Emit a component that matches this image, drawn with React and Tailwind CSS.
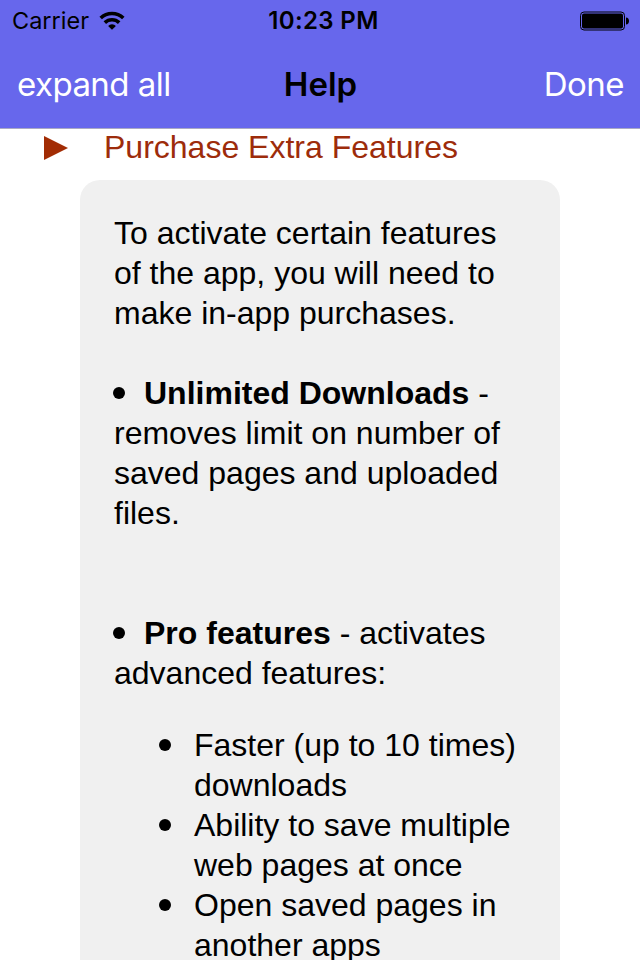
import React from "react";

const extras = [
  ["Faster (up to 10 times)", "downloads"],
  ["Ability to save multiple", "web pages at once"],
  ["Open saved pages in", "another apps"],
];

function StatusBar() {
  return (
    <div className="grid h-10 grid-cols-3 items-center pl-3 pr-[11px] pt-px text-[24px] leading-10">
      <div className="flex items-center gap-2.5">
        <span className="text-[23.5px]">Carrier</span>
        <svg width="26" height="20" viewBox="0 0 26 20" fill="none" stroke="#000" strokeWidth="3.6">
          <path d="M1.700 7a16.300 16.300 0 0 1 22.600 0" />
          <path d="M5.800 11.600a10.500 10.500 0 0 1 14.400 0" />
          <path d="M13 18.800l-3.900-3.900a5.500 5.500 0 0 1 7.800 0z" fill="#000" stroke="none" />
        </svg>
      </div>
      <span className="pl-1.5 text-center font-semibold tracking-[0.35px]">10:23 PM</span>
      <svg className="justify-self-end" width="49" height="20" viewBox="0 0 49 20">
        <rect x="0.500" y="1" width="44" height="18" rx="3.500" fill="none" stroke="#000" strokeWidth="1" />
        <rect x="2" y="2.500" width="41" height="15" rx="2" />
        <path d="M46 6.500c4 0 4 7 0 7z" />
      </svg>
    </div>
  );
}

export default function App() {
  return (
    <div className="flex h-[960px] w-[640px] flex-col overflow-hidden bg-white font-['Liberation_Sans',Arial,sans-serif] text-[32px] leading-10 text-black">
      <header className="h-[129px] shrink-0 border-b border-[#a9a9c4] bg-[#6767ec] font-[Inter,sans-serif]">
        <StatusBar />
        <nav className="grid h-[87px] grid-cols-3 items-center pl-[17px] pr-4 text-[33px]">
          <button className="whitespace-nowrap text-left tracking-[-0.55px] text-white">expand all</button>
          <h1 className="text-center font-semibold">Help</h1>
          <button className="text-right tracking-[-0.5px] text-white">Done</button>
        </nav>
      </header>

      <main className="flex-1">
        <div className="flex h-[51px] items-start pl-11 text-[#9d2c0b]">
          <svg className="mt-[7px]" width="24" height="24" viewBox="0 0 24 24" fill="#a22c04">
            <path d="M0 0l24 12L0 24z" />
          </svg>
          <h2 className="-mt-0.5 ml-9">Purchase Extra Features</h2>
        </div>

        <section className="ml-20 h-[900px] w-[480px] whitespace-nowrap rounded-t-[20px] bg-[#f0f0f0] pl-[34px] pt-[33px]">
          <p>To activate certain features<br />of the app, you will need to<br />make in-app purchases.</p>
          <div className="mt-10">
            <span className="-ml-px mr-[19px] inline-block size-3 -translate-y-[5px] rounded-full bg-black" />
            <b>Unlimited Downloads</b> -
            <p>removes limit on number of<br />saved pages and uploaded<br />files.</p>
          </div>
          <div className="mt-20">
            <span className="-ml-px mr-[19px] inline-block size-3 -translate-y-[5px] rounded-full bg-black" />
            <b>Pro features</b> - activates
            <p>advanced features:</p>
          </div>
          <ul className="ml-[45px] mt-8">
            {extras.map(([first, second]) => (
              <li key={first} className="flex">
                <span className="mr-[23px] mt-[14px] size-3 rounded-full bg-black" />
                <span>{first}<br />{second}</span>
              </li>
            ))}
          </ul>
        </section>
      </main>
    </div>
  );
}
